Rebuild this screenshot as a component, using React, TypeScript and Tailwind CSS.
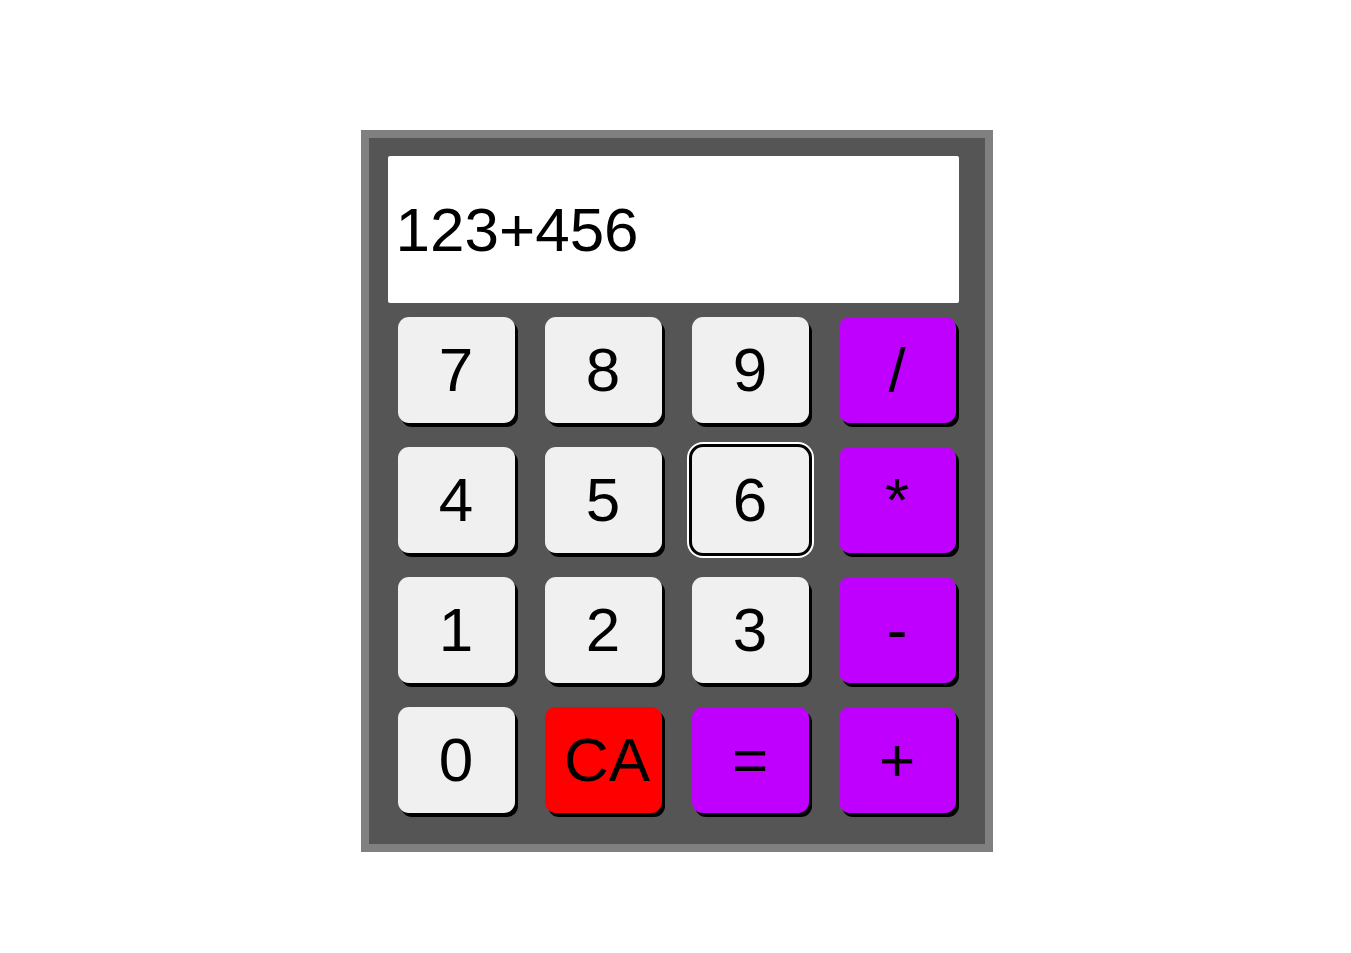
import React from 'react';

// Simple calculator face: display on top, 4x4 key grid below.
type Key = { label: string; kind: 'num' | 'op' | 'clear'; focus?: boolean };

const keys: Key[] = [
  { label: '7', kind: 'num' }, { label: '8', kind: 'num' }, { label: '9', kind: 'num' }, { label: '/', kind: 'op' },
  { label: '4', kind: 'num' }, { label: '5', kind: 'num' }, { label: '6', kind: 'num', focus: true }, { label: '*', kind: 'op' },
  { label: '1', kind: 'num' }, { label: '2', kind: 'num' }, { label: '3', kind: 'num' }, { label: '-', kind: 'op' },
  { label: '0', kind: 'num' }, { label: 'CA', kind: 'clear' }, { label: '=', kind: 'op' }, { label: '+', kind: 'op' },
];

const tone = (k: Key) =>
  k.kind === 'clear' ? 'bg-[#ff0000] pl-[8px]' : k.kind === 'op' ? 'bg-[#bf00ff]' : 'bg-[#f0f0f0]';

export default function App() {
  return (
    <div className="min-h-screen bg-white pt-[130px] font-['Liberation_Sans',Arial,sans-serif]">
      <div className="mx-auto w-[632px] translate-x-[1px] border-[8px] border-[#808080] bg-[#555555] pt-[18px] pl-[19px] pb-[31px]">
        <div className="w-[571px] h-[147px] bg-white rounded-[2px] flex items-center pl-[8px]">
          <span className="text-[62px] leading-none text-black">123+456</span>
        </div>
        <div className="mt-[14px] ml-[10px] grid grid-cols-[repeat(4,117px)] gap-x-[30px] gap-y-[24px]">
          {keys.map(k => (
            <button
              key={k.label}
              className={`h-[106px] rounded-[11px] flex items-center justify-center text-[62px] leading-none text-black ${tone(k)} ${
                k.focus
                  ? 'outline-[3px] outline-solid outline-black shadow-[0_0_0_5px_#ffffff]'
                  : 'shadow-[3px_4px_0_#000000]'
              }`}
            >
              {k.label}
            </button>
          ))}
        </div>
      </div>
    </div>
  );
}
